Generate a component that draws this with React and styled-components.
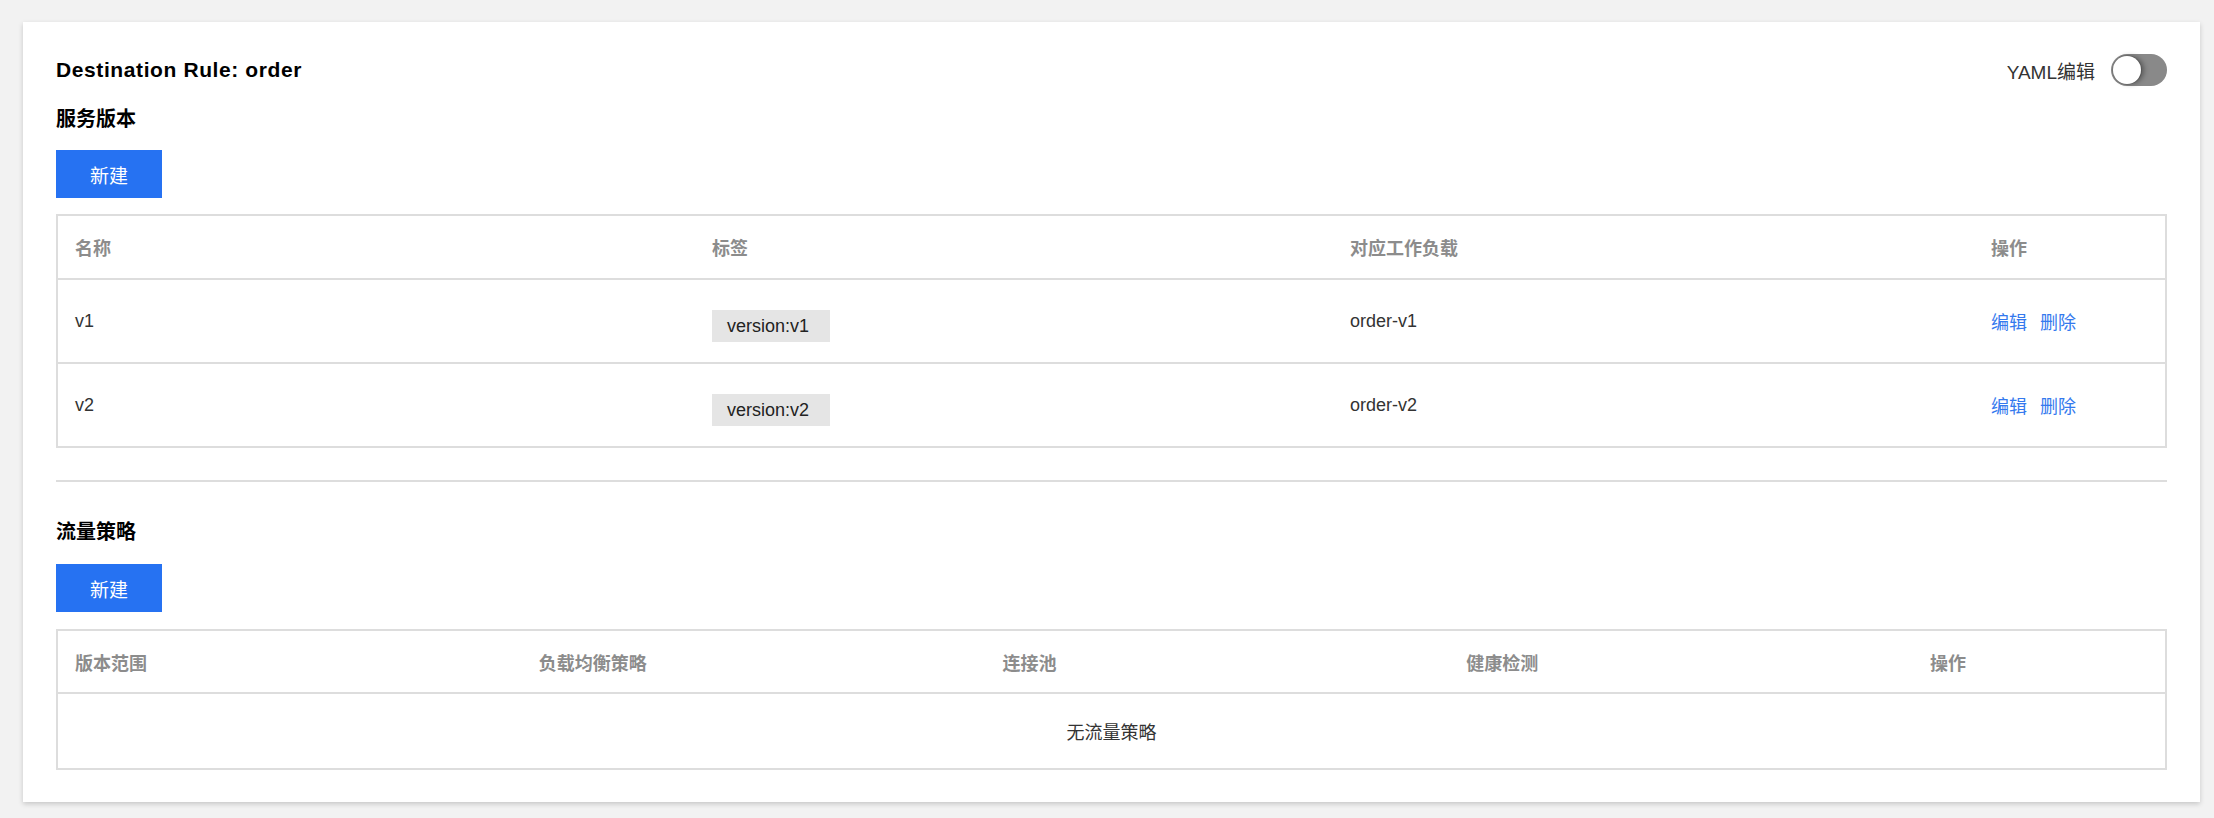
import React from "react";
import styled, { createGlobalStyle } from "styled-components";

const Global = createGlobalStyle`
  html, body { margin: 0; padding: 0; background: #f2f2f2; }
  body {
    font-family: "Liberation Sans", "Noto Sans CJK SC", sans-serif;
    color: #333;
  }
  * { box-sizing: border-box; }
`;

const Page = styled.div`
  padding: 22px 14px 16px 23px;
`;

const Card = styled.section`
  background: #fff;
  box-shadow: 0 2px 5px rgba(0, 0, 0, 0.18);
  padding: 32px 33px 32px 33px;
`;

const TopBar = styled.div`
  display: flex;
  align-items: center;
  justify-content: space-between;
  height: 32px;
`;

const Title = styled.h1`
  margin: 0;
  font-size: 21px;
  letter-spacing: 0.6px;
  font-weight: 700;
  color: #000;
  line-height: 28px;
`;

const ToggleGroup = styled.label`
  display: flex;
  align-items: center;
  gap: 16px;
  font-size: 19px;
  color: #333;
`;

const Switch = styled.span`
  position: relative;
  display: inline-block;
  width: 56px;
  height: 32px;
  border-radius: 16px;
  background: ${(p) => (p.$on ? "#2672f2" : "#898989")};
  &::after {
    content: "";
    position: absolute;
    top: 2px;
    left: ${(p) => (p.$on ? "26px" : "2px")};
    width: 28px;
    height: 28px;
    border-radius: 50%;
    background: #fff;
    box-shadow: 0 0 0 1px rgba(0, 0, 0, 0.12), 3px 0 5px rgba(0, 0, 0, 0.35);
  }
`;

const SectionTitle = styled.h2`
  margin: ${(p) => p.$top}px 0 0;
  font-size: 20px;
  font-weight: 700;
  color: #000;
  line-height: 28px;
`;

const PrimaryButton = styled.button`
  display: block;
  margin-top: ${(p) => p.$top}px;
  width: 106px;
  height: 48px;
  border: none;
  background: #2672f2;
  color: #fff;
  font-family: inherit;
  font-size: 19px;
  cursor: pointer;
`;

const Table = styled.div`
  margin-top: ${(p) => p.$top}px;
  border: 2px solid #dddddd;
`;

const HeadRow = styled.div`
  display: grid;
  grid-template-columns: ${(p) => p.$cols};
  height: ${(p) => p.$h + 2}px;
  border-bottom: 2px solid #dddddd;
`;

const HeadCell = styled.div`
  display: flex;
  align-items: center;
  padding-left: 17px;
  font-size: 18px;
  font-weight: 700;
  color: #8c8c8c;
`;

const BodyRow = styled.div`
  display: grid;
  grid-template-columns: ${(p) => p.$cols};
  height: 82px;
  & + & { border-top: 2px solid #dddddd; height: 84px; }
`;

const Cell = styled.div`
  display: flex;
  align-items: center;
  gap: 13px;
  padding-left: 17px;
  font-size: 18px;
  color: #333;
`;

const Tag = styled.span`
  display: inline-block;
  margin-top: 10px;
  height: 32px;
  line-height: 32px;
  padding: 0 21px 0 15px;
  background: #e5e5e5;
  color: #222;
  font-size: 18px;
`;

const Link = styled.a`
  color: #3479ee;
  font-size: 18px;
  text-decoration: none;
  cursor: pointer;
`;

const EmptyRow = styled.div`
  height: 74px;
  display: flex;
  align-items: center;
  justify-content: center;
  font-size: 18px;
  color: #333;
`;

const Divider = styled.hr`
  margin: 32px 0 0;
  border: none;
  height: 2px;
  background: #dddddd;
`;

const versionCols = "637fr 638fr 641fr 191fr";
const policyCols = "464fr 464fr 464fr 464fr 252fr";

const versions = [
  { name: "v1", tag: "version:v1", workload: "order-v1" },
  { name: "v2", tag: "version:v2", workload: "order-v2" },
];

export default function App() {
  return (
    <>
      <Global />
      <Page>
        <Card>
          <TopBar>
            <Title>Destination Rule: order</Title>
            <ToggleGroup>
              YAML编辑
              <Switch $on={false} />
            </ToggleGroup>
          </TopBar>

          <SectionTitle $top={19}>服务版本</SectionTitle>
          <PrimaryButton $top={17}>新建</PrimaryButton>
          <Table $top={16}>
            <HeadRow $cols={versionCols} $h={62}>
              <HeadCell>名称</HeadCell>
              <HeadCell>标签</HeadCell>
              <HeadCell>对应工作负载</HeadCell>
              <HeadCell>操作</HeadCell>
            </HeadRow>
            {versions.map((v) => (
              <BodyRow key={v.name} $cols={versionCols}>
                <Cell>{v.name}</Cell>
                <Cell>
                  <Tag>{v.tag}</Tag>
                </Cell>
                <Cell>{v.workload}</Cell>
                <Cell>
                  <Link>编辑</Link>
                  <Link>删除</Link>
                </Cell>
              </BodyRow>
            ))}
          </Table>

          <Divider />

          <SectionTitle $top={36}>流量策略</SectionTitle>
          <PrimaryButton $top={18}>新建</PrimaryButton>
          <Table $top={17}>
            <HeadRow $cols={policyCols} $h={61}>
              <HeadCell>版本范围</HeadCell>
              <HeadCell>负载均衡策略</HeadCell>
              <HeadCell>连接池</HeadCell>
              <HeadCell>健康检测</HeadCell>
              <HeadCell>操作</HeadCell>
            </HeadRow>
            <EmptyRow>无流量策略</EmptyRow>
          </Table>
        </Card>
      </Page>
    </>
  );
}
